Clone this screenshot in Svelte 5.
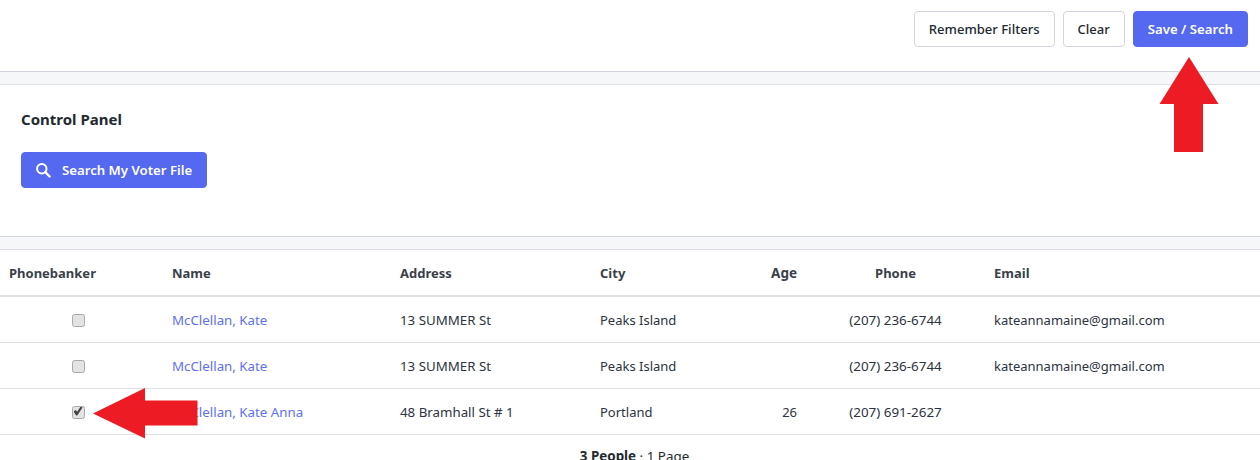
<script>
  const rows = [
    { checked: false, name: 'McClellan, Kate', address: '13 SUMMER St', city: 'Peaks Island', age: '', phone: '(207) 236-6744', email: 'kateannamaine@gmail.com' },
    { checked: false, name: 'McClellan, Kate', address: '13 SUMMER St', city: 'Peaks Island', age: '', phone: '(207) 236-6744', email: 'kateannamaine@gmail.com' },
    { checked: true, name: 'McClellan, Kate Anna', address: '48 Bramhall St # 1', city: 'Portland', age: '26', phone: '(207) 691-2627', email: '' }
  ]
</script>

<div class="page">
  <header>
    <button class="btn">Remember Filters</button>
    <button class="btn">Clear</button>
    <button class="btn primary">Save / Search</button>
  </header>

  <div class="band"></div>

  <section class="panel">
    <h2>Control Panel</h2>
    <button class="btn primary search">
      <svg width="16" height="16" viewBox="0 0 16 16" aria-hidden="true">
        <circle cx="5.800" cy="6.700" r="4.700" fill="none" stroke="currentColor" stroke-width="2" />
        <path d="M9.300 10.200 13.600 14.500" stroke="currentColor" stroke-width="2.400" stroke-linecap="round" />
      </svg>
      Search My Voter File
    </button>
  </section>

  <div class="band"></div>

  <table>
    <colgroup>
      <col style="width:156px" /><col style="width:228px" /><col style="width:200px" />
      <col style="width:150px" /><col style="width:79px" /><col style="width:165px" /><col />
    </colgroup>
    <thead>
      <tr>
        <th class="first">Phonebanker</th>
        <th>Name</th>
        <th>Address</th>
        <th>City</th>
        <th class="right age">Age</th>
        <th class="center">Phone</th>
        <th>Email</th>
      </tr>
    </thead>
    <tbody>
      {#each rows as row}
        <tr>
          <td class="center"><input type="checkbox" checked={row.checked} /></td>
          <td class="wide"><a href="#top">{row.name}</a></td>
          <td class="wide">{row.address}</td>
          <td>{row.city}</td>
          <td class="right">{row.age}</td>
          <td class="center phone">{row.phone}</td>
          <td>{row.email}</td>
        </tr>
      {/each}
    </tbody>
  </table>

  <p class="count"><strong>3 People</strong> · 1 Page</p>

  <svg class="arrow up" width="60" height="95" viewBox="0 0 60 95" aria-hidden="true">
    <polygon points="30,0 59.500,47 44,47 44,95 15,95 15,47 0.500,47" fill="#ed1c24" />
  </svg>
  <svg class="arrow left" width="105" height="51" viewBox="0 0 105 51" aria-hidden="true">
    <polygon points="0,25.500 52,0 52,12.500 104.500,12.500 104.500,37.500 52,37.500 52,50.500" fill="#ed1c24" />
  </svg>
</div>

<style>
  :global(body) {
    margin: 0;
    background: #fff;
  }
  .page {
    position: relative;
    height: 460px;
    overflow: hidden;
    font-family: "Noto Sans", sans-serif;
    font-size: 13px;
    color: #22292f;
  }
  header {
    display: flex;
    justify-content: flex-end;
    gap: 8px;
    height: 71px;
    padding: 11px 12px 0 0;
    box-sizing: border-box;
  }
  .btn {
    height: 36px;
    padding: 0 14px;
    border: 1px solid #d1d5de;
    border-radius: 4px;
    background: #fff;
    color: #22292f;
    font: 500 13.050px "Noto Sans", sans-serif;
  }
  .btn.primary {
    background: #5468f0;
    border-color: #5468f0;
    color: #fff;
    font-size: 13.200px;
    font-weight: 600;
  }
  .band {
    height: 12px;
    background: #f6f7f9;
    border-top: 1px solid #d3d5de;
    border-bottom: 1px solid #dfe0e6;
  }
  .panel {
    height: 151px;
    padding: 0 21px;
    box-sizing: border-box;
  }
  h2 {
    margin: 0;
    padding-top: 24px;
    font-size: 15px;
    line-height: 20px;
    font-weight: 700;
  }
  .search {
    display: inline-flex;
    align-items: center;
    gap: 10px;
    margin-top: 23px;
    padding: 0 14px;
  }
  table {
    width: 100%;
    border-collapse: collapse;
    table-layout: fixed;
  }
  th, td {
    padding: 0 16px;
    text-align: left;
    white-space: nowrap;
  }
  th {
    height: 45px;
    font-weight: 700;
    color: #3a3f4a;
    border-bottom: 2px solid #dfe0e6;
  }
  th.first {
    padding-left: 9px;
    padding-right: 0;
  }
  th.age {
    font-size: 13.500px;
  }
  td {
    height: 45px;
    border-bottom: 1px solid #dfe0e6;
    color: #2d3340;
  }
  td.wide {
    font-size: 13.300px;
  }
  td.phone {
    font-size: 13.400px;
  }
  .center {
    text-align: center;
  }
  .right {
    text-align: right;
  }
  input[type="checkbox"] {
    appearance: none;
    position: relative;
    display: block;
    margin: 1px auto 0;
    width: 13px;
    height: 13px;
    box-sizing: border-box;
    background: #e3e3e3;
    border: 1px solid #a9a9a9;
    border-radius: 2.500px;
  }
  input[type="checkbox"]:checked::after {
    content: "";
    position: absolute;
    left: 1px;
    top: 0;
    width: 9px;
    height: 9px;
    background: #444;
    clip-path: polygon(0 55%, 25% 40%, 40% 58%, 80% 0, 100% 12%, 42% 100%, 30% 100%);
  }
  a {
    color: #6070f3;
    text-decoration: none;
  }
  .count {
    margin: 11px 0 0;
    padding-left: 9px;
    text-align: center;
    font-size: 13.400px;
    line-height: 20px;
    color: #22292f;
  }
  .arrow {
    position: absolute;
    display: block;
  }
  .arrow.up {
    left: 1159px;
    top: 57px;
  }
  .arrow.left {
    left: 93px;
    top: 388px;
  }
</style>
